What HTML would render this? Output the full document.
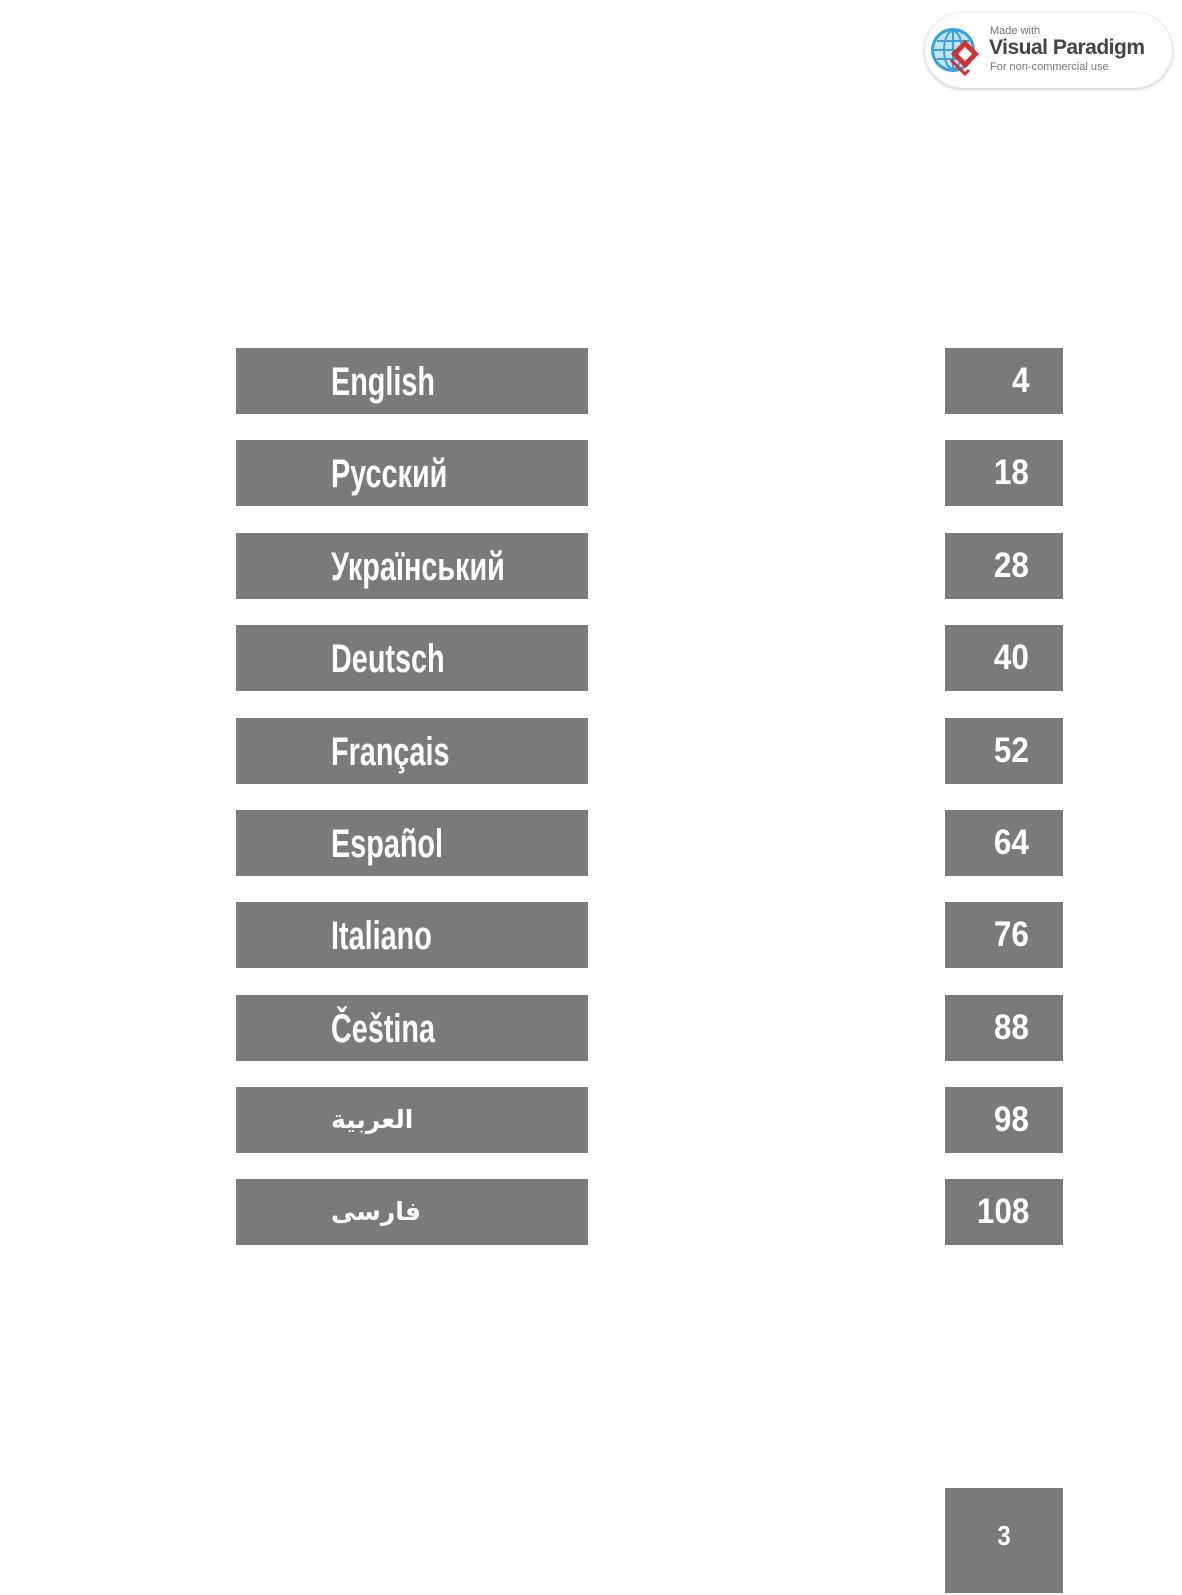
<!DOCTYPE html>
<html><head><meta charset="utf-8"><style>
body{margin:0;width:1182px;height:1595px;background:#fff;position:relative;overflow:hidden;font-family:"Liberation Sans Narrow","Liberation Sans",sans-serif;}
.b{position:absolute;background:#7a7a7c;color:#fff;font-weight:bold;}
.l{left:236px;width:352px;height:66px;}
.r{left:945px;width:118px;height:66px;}
.l span{position:absolute;left:95px;top:14px;font-size:40px;line-height:40px;transform:scaleX(0.72);transform-origin:left top;white-space:nowrap;}
.l span.ar{font-family:"DejaVu Sans",sans-serif;font-weight:bold;font-size:25px;top:13px;transform:none;}
.r span{position:absolute;right:34px;top:15px;font-size:35px;line-height:35px;transform:scaleX(0.9);transform-origin:right top;}
</style></head><body>
<div style="position:absolute;left:925px;top:13px;width:247px;height:75px;border-radius:38px;background:#fff;box-shadow:0 1px 4px rgba(0,0,0,.25);">
<svg width="56" height="56" viewBox="0 0 56 56" style="position:absolute;left:4px;top:9px">
<circle cx="24" cy="28" r="22" fill="#3aa0dc"/><circle cx="24" cy="28" r="19" fill="#bfe3f5"/>
<g stroke="#3aa0dc" stroke-width="2" fill="none"><ellipse cx="24" cy="28" rx="9" ry="19"/><line x1="5" y1="28" x2="43" y2="28"/><line x1="8" y1="19" x2="40" y2="19"/><line x1="8" y1="37" x2="40" y2="37"/><line x1="24" y1="9" x2="24" y2="47"/></g>
<path d="M36 18 L50 32 L36 46 L22 32 Z" fill="#d62f2f"/><path d="M36 25 L43 32 L36 39 L29 32 Z" fill="#fff"/><path d="M22 38 L36 52 L40 48" stroke="#d62f2f" stroke-width="3" fill="none"/>
</svg>
<div style="position:absolute;left:65px;top:12px;font-family:'Liberation Sans',sans-serif;font-size:11px;color:#777">Made with</div>
<div style="position:absolute;left:64px;top:23px;font-family:'Liberation Sans',sans-serif;font-size:21px;font-weight:bold;color:#444;letter-spacing:-0.5px">Visual Paradigm</div>
<div style="position:absolute;left:65px;top:48px;font-family:'Liberation Sans',sans-serif;font-size:11px;color:#777">For non-commercial use</div>
</div>

<div class="b l" style="top:348px"><span>English</span></div><div class="b r" style="top:348px"><span>4</span></div>
<div class="b l" style="top:440px"><span>Русский</span></div><div class="b r" style="top:440px"><span>18</span></div>
<div class="b l" style="top:533px"><span>Український</span></div><div class="b r" style="top:533px"><span>28</span></div>
<div class="b l" style="top:625px"><span>Deutsch</span></div><div class="b r" style="top:625px"><span>40</span></div>
<div class="b l" style="top:718px"><span>Français</span></div><div class="b r" style="top:718px"><span>52</span></div>
<div class="b l" style="top:810px"><span>Español</span></div><div class="b r" style="top:810px"><span>64</span></div>
<div class="b l" style="top:902px"><span>Italiano</span></div><div class="b r" style="top:902px"><span>76</span></div>
<div class="b l" style="top:995px"><span>Čeština</span></div><div class="b r" style="top:995px"><span>88</span></div>
<div class="b l" style="top:1087px"><span class="ar">العربية</span></div><div class="b r" style="top:1087px"><span>98</span></div>
<div class="b l" style="top:1179px"><span class="ar">فارسی</span></div><div class="b r" style="top:1179px"><span>108</span></div>

<div class="b" style="left:945px;top:1488px;width:118px;height:105px;"><span style="position:absolute;left:0;right:0;text-align:center;top:34px;font-size:28px;line-height:28px;transform:scaleX(0.85)">3</span></div>
</body></html>
